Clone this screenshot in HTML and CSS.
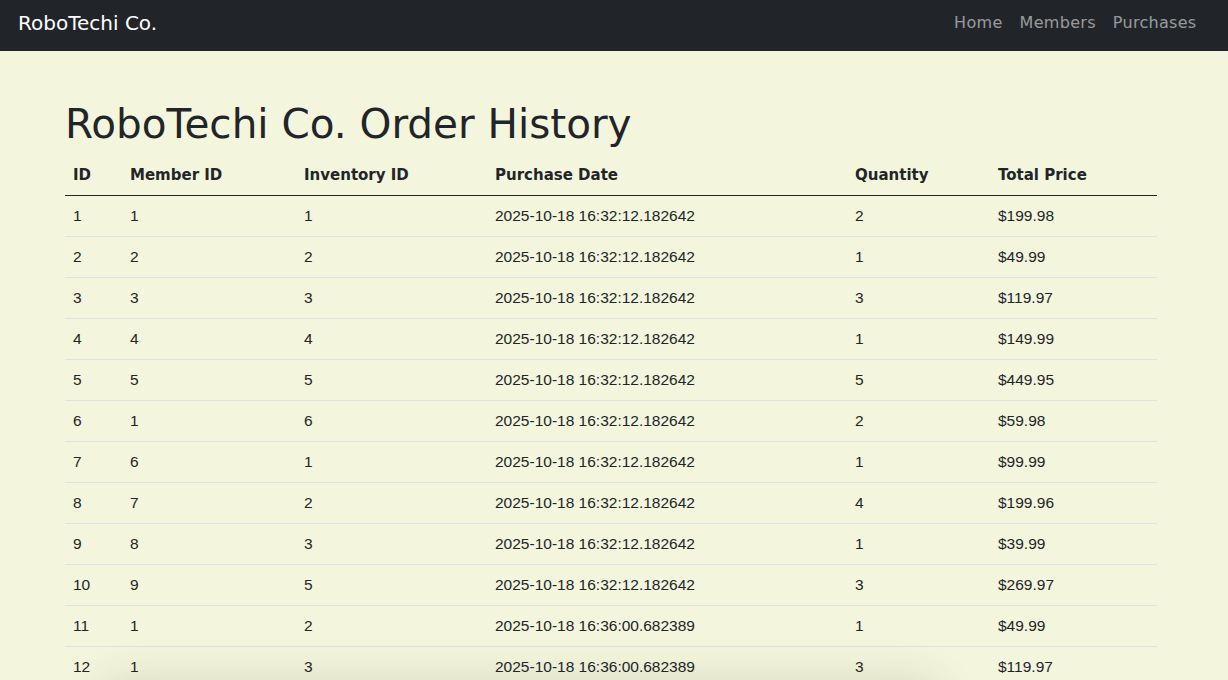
FILE: index.html
```html
<!DOCTYPE html>
<html lang="en">
<head>
<meta charset="utf-8">
<title>RoboTechi Co. Order History</title>
<link rel="stylesheet" href="styles.css">
</head>
<body>
<nav class="navbar">
  <a class="brand" href="#">RoboTechi Co.</a>
  <ul class="nav-links">
    <li><a href="#">Home</a></li>
    <li><a href="#">Members</a></li>
    <li><a href="#">Purchases</a></li>
  </ul>
</nav>
<main class="content">
  <h1 class="title">RoboTechi Co. Order History</h1>
  <table class="orders">
    <colgroup>
      <col class="c-id"><col class="c-member"><col class="c-inv"><col class="c-date"><col class="c-qty"><col class="c-price">
    </colgroup>
    <thead>
      <tr><th>ID</th><th>Member ID</th><th>Inventory ID</th><th>Purchase Date</th><th>Quantity</th><th>Total Price</th></tr>
    </thead>
    <tbody>
      <tr><td>1</td><td>1</td><td>1</td><td>2025-10-18 16:32:12.182642</td><td>2</td><td>$199.98</td></tr>
      <tr><td>2</td><td>2</td><td>2</td><td>2025-10-18 16:32:12.182642</td><td>1</td><td>$49.99</td></tr>
      <tr><td>3</td><td>3</td><td>3</td><td>2025-10-18 16:32:12.182642</td><td>3</td><td>$119.97</td></tr>
      <tr><td>4</td><td>4</td><td>4</td><td>2025-10-18 16:32:12.182642</td><td>1</td><td>$149.99</td></tr>
      <tr><td>5</td><td>5</td><td>5</td><td>2025-10-18 16:32:12.182642</td><td>5</td><td>$449.95</td></tr>
      <tr><td>6</td><td>1</td><td>6</td><td>2025-10-18 16:32:12.182642</td><td>2</td><td>$59.98</td></tr>
      <tr><td>7</td><td>6</td><td>1</td><td>2025-10-18 16:32:12.182642</td><td>1</td><td>$99.99</td></tr>
      <tr><td>8</td><td>7</td><td>2</td><td>2025-10-18 16:32:12.182642</td><td>4</td><td>$199.96</td></tr>
      <tr><td>9</td><td>8</td><td>3</td><td>2025-10-18 16:32:12.182642</td><td>1</td><td>$39.99</td></tr>
      <tr><td>10</td><td>9</td><td>5</td><td>2025-10-18 16:32:12.182642</td><td>3</td><td>$269.97</td></tr>
      <tr><td>11</td><td>1</td><td>2</td><td>2025-10-18 16:36:00.682389</td><td>1</td><td>$49.99</td></tr>
      <tr><td>12</td><td>1</td><td>3</td><td>2025-10-18 16:36:00.682389</td><td>3</td><td>$119.97</td></tr>
    </tbody>
  </table>
</main>
<div class="drop-shadow"></div>
</body>
</html>
```

FILE: styles.css
```css
html, body {
  margin: 0;
  padding: 0;
}
body {
  background: #f3f6dc;
  color: #212529;
  font-family: "DejaVu Sans", "Liberation Sans", sans-serif;
  overflow: hidden;
  height: 680px;
  position: relative;
}
.navbar {
  height: 51px;
  background: #212529;
  display: flex;
  align-items: flex-start;
  justify-content: space-between;
  padding: 0 23px 0 18px;
  box-sizing: border-box;
}
.brand {
  margin-top: 8px;
  font-size: 20px;
  line-height: 30px;
  color: #fff;
  text-decoration: none;
}
.nav-links {
  list-style: none;
  display: flex;
  margin: 11px 0 0;
  padding: 0;
}
.nav-links a {
  display: block;
  padding: 0 8.5px;
  font-size: 16px;
  line-height: 24px;
  letter-spacing: 0.3px;
  color: rgba(255, 255, 255, 0.55);
  text-decoration: none;
}
.content {
  padding: 49px 0 0 65px;
  width: 1092px;
}
.title {
  margin: 0 0 7px 0;
  font-size: 40.5px;
  line-height: 48px;
  font-weight: 400;
}
.orders {
  width: 1092px;
  border-collapse: collapse;
  table-layout: fixed;
}
.c-id { width: 57px; }
.c-member { width: 174px; }
.c-inv { width: 191px; }
.c-date { width: 360px; }
.c-qty { width: 143px; }
.c-price { width: 167px; }
.orders th {
  text-align: left;
  padding: 8px;
  font-size: 15px;
  line-height: 24px;
  font-weight: 700;
  border-bottom: 1px solid #212529;
}
.orders td {
  padding: 8px;
  font-family: "Liberation Sans", "DejaVu Sans", sans-serif;
  font-size: 15.5px;
  line-height: 24px;
  border-bottom: 1px solid #dfe1e6;
}
.drop-shadow {
  position: absolute;
  left: 110px;
  width: 820px;
  top: 700px;
  height: 40px;
  border-radius: 20px;
  box-shadow: 0 -6px 40px 18px rgba(60, 60, 30, 0.12);
}
```
